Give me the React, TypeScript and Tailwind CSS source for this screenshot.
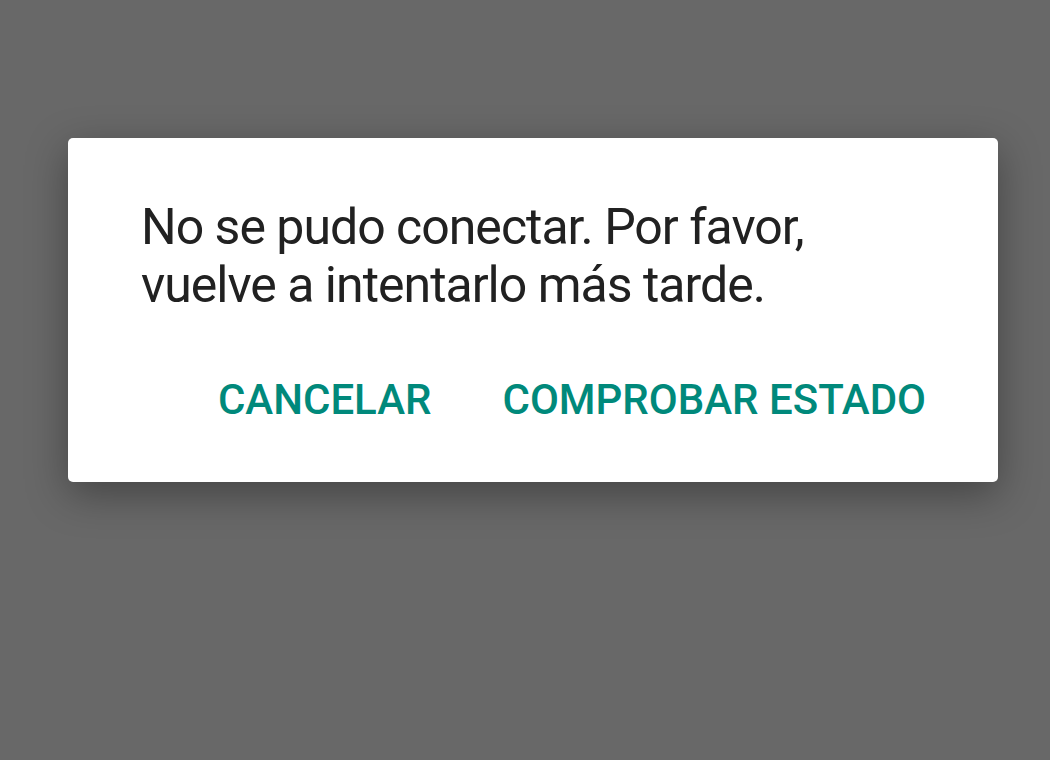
import React from 'react';

export default function App() {
  return (
    <div className="h-[760px] w-[1050px] overflow-hidden bg-[#686868] font-['Roboto',sans-serif]">
      <div className="ml-[68px] mt-[138px] h-[344px] w-[930px] rounded-[5px] bg-white shadow-[0_12px_40px_rgba(0,0,0,0.35)]">
        {/* message */}
        <p className="pl-[73px] pt-[60px] text-[50px] leading-[58px] tracking-[-1px] text-[#212121]">
          No se pudo conectar. Por favor,
          <br />
          vuelve a intentarlo más tarde.
        </p>
        {/* actions */}
        <div className="mt-[57px] flex justify-end gap-[71px] pr-[72px] text-[42px] font-medium leading-[58px] text-[#00897b]">
          <button>CANCELAR</button>
          <button>COMPROBAR ESTADO</button>
        </div>
      </div>
    </div>
  );
}
